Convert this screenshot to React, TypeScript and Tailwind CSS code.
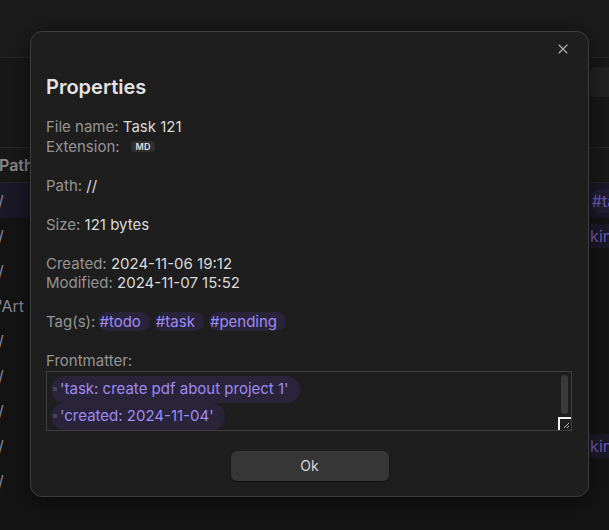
import { X } from 'lucide-react'

const rows = ['/', '/', '/', "'Art", '/', '/', '/', '/', '/']

function Backdrop() {
  return (
    <div className="flex h-[530px] w-[609px] flex-col overflow-hidden bg-[#141414] text-[#9a9a9a]">
      <div className="h-[58px] shrink-0 border-b border-[#262626] bg-[#1b1b1b]" />
      <div className="flex h-[90px] shrink-0 items-start justify-end border-b border-[#262626] bg-[#181818] pt-[9px]">
        <div className="mr-[-20px] h-[30px] w-[40px] rounded-[6px] bg-[#222222]" />
      </div>
      <div className="flex h-[35px] shrink-0 items-center border-b border-[#262626] bg-[#191919]">
        <span className="ml-[-1px] text-[16px] font-semibold text-[#8a8a8a]">Path</span>
      </div>
      {rows.map((r, i) => (
        <div
          key={i}
          className={`flex h-[35px] shrink-0 items-center justify-between ${i === 0 ? 'bg-[#1b1828]' : ''}`}
        >
          <span className="ml-[-2px] text-[16px] text-[#8a8a9a]">{r}</span>
          {i === 0 && (
            <span className="mr-[-19px] rounded-full bg-[#221e33] px-[2px] text-[16px] text-[#6d5bb8]">#tag</span>
          )}
          {(i === 1 || i === 7) && (
            <span className="mr-[-13px] bg-[#1c1a28] pl-px text-[16px] text-[#6d5bb8]">kind</span>
          )}
        </div>
      ))}
    </div>
  )
}

function Tag({ label }: { label: string }) {
  return (
    <span className="inline-block h-[19px] rounded-full bg-[#29243a] pl-px pr-[9px] leading-[19px] text-[#a08af4]">
      {label}
    </span>
  )
}

function Pill({ text }: { text: string }) {
  return (
    <div className="flex h-[27px] w-fit items-center rounded-full bg-[#29243a] pl-[2px] pr-[11px]">
      <span className="mr-[3px] h-[4px] w-[4px] bg-[#4a4458]" />
      <span className="text-[15px] text-[#a08af4]">{text}</span>
    </div>
  )
}

function PropertiesModal() {
  return (
    <div className="absolute left-[30px] top-[31px] flex h-[466px] w-[559px] flex-col rounded-[12px] border border-[#3d3d3d] bg-[#1e1e1e] px-[15px] pt-[43px] shadow-[0_4px_24px_rgba(0,0,0,0.5)]">
      <button
        type="button"
        aria-label="Close"
        className="absolute right-[17px] top-[9px] flex h-[16px] w-[16px] items-center justify-center text-[#b5b5b5]"
      >
        <X className="h-[16px] w-[16px]" strokeWidth={1.6} />
      </button>
      <h2 className="h-[24px] text-[20px] font-semibold leading-[24px] text-[#e4e4e4]">Properties</h2>
      <div className="mt-[18px] text-[15px] leading-[19.5px] text-[#dadada]">
        <div>
          <span className="text-[#959595]">File name: </span>Task 121
        </div>
        <div className="flex items-center">
          <span className="text-[#959595]">Extension: </span>
          <span className="ml-[11px] rounded-[4px] bg-[#2f2f2f] px-[5px] text-[9px] font-semibold leading-[11px] text-[#e0e0e0]">
            MD
          </span>
        </div>
        <div className="h-[19.5px]" />
        <div>
          <span className="text-[#959595]">Path: </span>//
        </div>
        <div className="h-[19.5px]" />
        <div>
          <span className="text-[#959595]">Size: </span>121 bytes
        </div>
        <div className="h-[19.5px]" />
        <div>
          <span className="text-[#959595]">Created: </span>2024-11-06 19:12
        </div>
        <div>
          <span className="text-[#959595]">Modified: </span>2024-11-07 15:52
        </div>
        <div className="h-[19.5px]" />
        <div className="flex items-center gap-[5px]">
          <span className="text-[#959595]">Tag(s): </span>
          <span className="-ml-[2px] flex gap-[5px]">
            <Tag label="#todo" />
            <Tag label="#task" />
            <Tag label="#pending" />
          </span>
        </div>
        <div className="h-[19.5px]" />
        <div className="text-[#959595]">Frontmatter:</div>
      </div>
      <div className="relative h-[60px] w-[526px] overflow-hidden border border-[#3f3f3f] bg-[#1e1e1e] pl-[4px] pt-[4px]">
        <Pill text="'task: create pdf about project 1'" />
        <Pill text="'created: 2024-11-04'" />
        <div className="absolute right-[3px] top-[3px] h-[39px] w-[7px] rounded-full bg-[#3a3a3a]" />
        <div className="absolute bottom-0 right-0 flex h-[13px] w-[13px] items-end justify-end border-l-2 border-t-2 border-[#f0f0f0] bg-[#1e1e1e]">
          <svg width="8" height="8" viewBox="0 0 8 8" className="mb-[1px] mr-[1px]">
            <path d="M7 2 L2 7 M7 5 L5 7" stroke="#bbbbbb" strokeWidth="1" />
          </svg>
        </div>
      </div>
      <div className="mt-[20px] flex justify-center">
        <button
          type="button"
          className="h-[30px] w-[158px] rounded-[6px] bg-[#363636] text-[14px] text-[#dadada] shadow-[0_1px_2px_rgba(0,0,0,0.4)]"
        >
          Ok
        </button>
      </div>
    </div>
  )
}

export default function App() {
  return (
    <div className="relative h-[530px] w-[609px] overflow-hidden font-['Inter',sans-serif]">
      <Backdrop />
      <PropertiesModal />
    </div>
  )
}
